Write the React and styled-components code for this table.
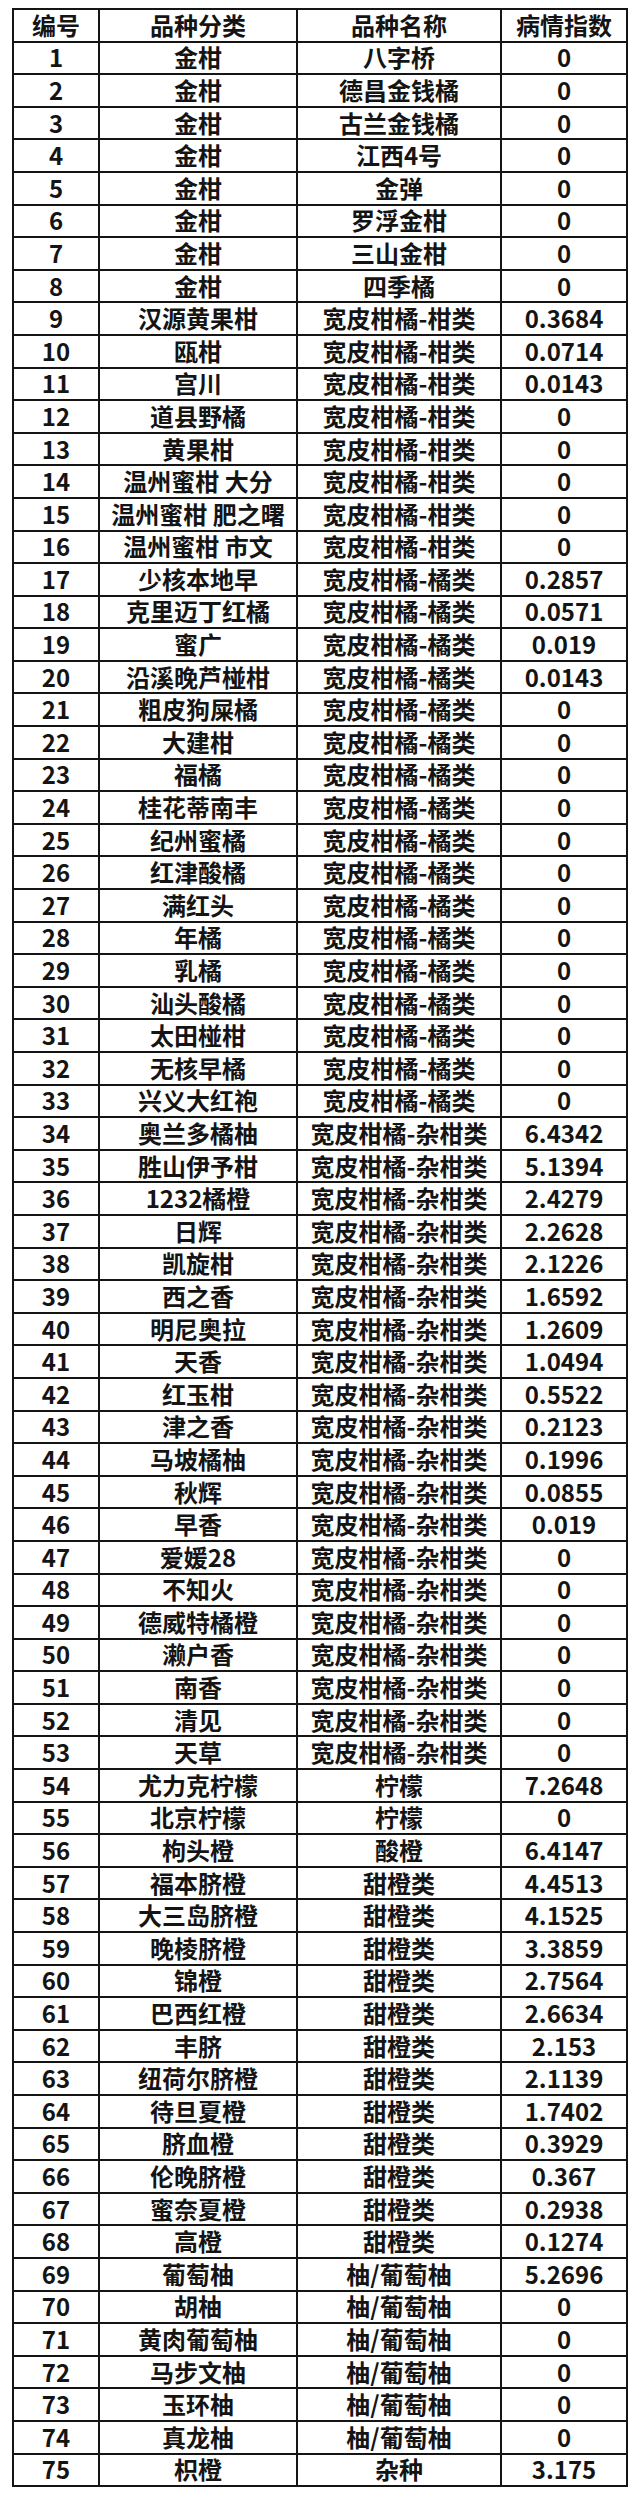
import React from "react";
import styled, { createGlobalStyle } from "styled-components";

const Global = createGlobalStyle`
  html, body { margin: 0; padding: 0; background: #ffffff; }
  body { font-family: "Noto Sans CJK SC", "Noto Sans", sans-serif; }
`;

const Page = styled.div`
  padding: 8px 12px 10px 12px;
  background: #ffffff;
`;

const Table = styled.div`
  width: 616px;
  box-sizing: border-box;
  display: grid;
  grid-template-columns: 84px 196px 202px 124px;
  grid-auto-rows: 30.6px;
  gap: 2px;
  padding: 2px;
  background: #151515;
`;

const Cell = styled.div`
  background: #ffffff;
  display: flex;
  align-items: center;
  justify-content: center;
  font-family: "Noto Sans CJK SC", "Noto Sans", sans-serif;
  font-weight: 700;
  font-size: ${(p) => (p.$head ? "24px" : "24px")};
  color: #141414;
  white-space: nowrap;
  line-height: 1;
  padding-bottom: 1px;
`;

const rows = [
  ["金柑", "八字桥", "0"],
  ["金柑", "德昌金钱橘", "0"],
  ["金柑", "古兰金钱橘", "0"],
  ["金柑", "江西4号", "0"],
  ["金柑", "金弹", "0"],
  ["金柑", "罗浮金柑", "0"],
  ["金柑", "三山金柑", "0"],
  ["金柑", "四季橘", "0"],
  ["汉源黄果柑", "宽皮柑橘-柑类", "0.3684"],
  ["瓯柑", "宽皮柑橘-柑类", "0.0714"],
  ["宫川", "宽皮柑橘-柑类", "0.0143"],
  ["道县野橘", "宽皮柑橘-柑类", "0"],
  ["黄果柑", "宽皮柑橘-柑类", "0"],
  ["温州蜜柑 大分", "宽皮柑橘-柑类", "0"],
  ["温州蜜柑 肥之曙", "宽皮柑橘-柑类", "0"],
  ["温州蜜柑 市文", "宽皮柑橘-柑类", "0"],
  ["少核本地早", "宽皮柑橘-橘类", "0.2857"],
  ["克里迈丁红橘", "宽皮柑橘-橘类", "0.0571"],
  ["蜜广", "宽皮柑橘-橘类", "0.019"],
  ["沿溪晚芦椪柑", "宽皮柑橘-橘类", "0.0143"],
  ["粗皮狗屎橘", "宽皮柑橘-橘类", "0"],
  ["大建柑", "宽皮柑橘-橘类", "0"],
  ["福橘", "宽皮柑橘-橘类", "0"],
  ["桂花蒂南丰", "宽皮柑橘-橘类", "0"],
  ["纪州蜜橘", "宽皮柑橘-橘类", "0"],
  ["红津酸橘", "宽皮柑橘-橘类", "0"],
  ["满红头", "宽皮柑橘-橘类", "0"],
  ["年橘", "宽皮柑橘-橘类", "0"],
  ["乳橘", "宽皮柑橘-橘类", "0"],
  ["汕头酸橘", "宽皮柑橘-橘类", "0"],
  ["太田椪柑", "宽皮柑橘-橘类", "0"],
  ["无核早橘", "宽皮柑橘-橘类", "0"],
  ["兴义大红袍", "宽皮柑橘-橘类", "0"],
  ["奥兰多橘柚", "宽皮柑橘-杂柑类", "6.4342"],
  ["胜山伊予柑", "宽皮柑橘-杂柑类", "5.1394"],
  ["1232橘橙", "宽皮柑橘-杂柑类", "2.4279"],
  ["日辉", "宽皮柑橘-杂柑类", "2.2628"],
  ["凯旋柑", "宽皮柑橘-杂柑类", "2.1226"],
  ["西之香", "宽皮柑橘-杂柑类", "1.6592"],
  ["明尼奥拉", "宽皮柑橘-杂柑类", "1.2609"],
  ["天香", "宽皮柑橘-杂柑类", "1.0494"],
  ["红玉柑", "宽皮柑橘-杂柑类", "0.5522"],
  ["津之香", "宽皮柑橘-杂柑类", "0.2123"],
  ["马坡橘柚", "宽皮柑橘-杂柑类", "0.1996"],
  ["秋辉", "宽皮柑橘-杂柑类", "0.0855"],
  ["早香", "宽皮柑橘-杂柑类", "0.019"],
  ["爱媛28", "宽皮柑橘-杂柑类", "0"],
  ["不知火", "宽皮柑橘-杂柑类", "0"],
  ["德威特橘橙", "宽皮柑橘-杂柑类", "0"],
  ["濑户香", "宽皮柑橘-杂柑类", "0"],
  ["南香", "宽皮柑橘-杂柑类", "0"],
  ["清见", "宽皮柑橘-杂柑类", "0"],
  ["天草", "宽皮柑橘-杂柑类", "0"],
  ["尤力克柠檬", "柠檬", "7.2648"],
  ["北京柠檬", "柠檬", "0"],
  ["枸头橙", "酸橙", "6.4147"],
  ["福本脐橙", "甜橙类", "4.4513"],
  ["大三岛脐橙", "甜橙类", "4.1525"],
  ["晚棱脐橙", "甜橙类", "3.3859"],
  ["锦橙", "甜橙类", "2.7564"],
  ["巴西红橙", "甜橙类", "2.6634"],
  ["丰脐", "甜橙类", "2.153"],
  ["纽荷尔脐橙", "甜橙类", "2.1139"],
  ["待旦夏橙", "甜橙类", "1.7402"],
  ["脐血橙", "甜橙类", "0.3929"],
  ["伦晚脐橙", "甜橙类", "0.367"],
  ["蜜奈夏橙", "甜橙类", "0.2938"],
  ["高橙", "甜橙类", "0.1274"],
  ["葡萄柚", "柚/葡萄柚", "5.2696"],
  ["胡柚", "柚/葡萄柚", "0"],
  ["黄肉葡萄柚", "柚/葡萄柚", "0"],
  ["马步文柚", "柚/葡萄柚", "0"],
  ["玉环柚", "柚/葡萄柚", "0"],
  ["真龙柚", "柚/葡萄柚", "0"],
  ["枳橙", "杂种", "3.175"],
];

const headers = ["编号", "品种分类", "品种名称", "病情指数"];

export default function App() {
  return (
    <>
      <Global />
      <Page>
        <Table>
          {headers.map((h) => (
            <Cell key={h} $head>
              {h}
            </Cell>
          ))}
          {rows.map((r, i) => (
            <React.Fragment key={i}>
              <Cell>{i + 1}</Cell>
              <Cell>{r[0]}</Cell>
              <Cell>{r[1]}</Cell>
              <Cell>{r[2]}</Cell>
            </React.Fragment>
          ))}
        </Table>
      </Page>
    </>
  );
}
